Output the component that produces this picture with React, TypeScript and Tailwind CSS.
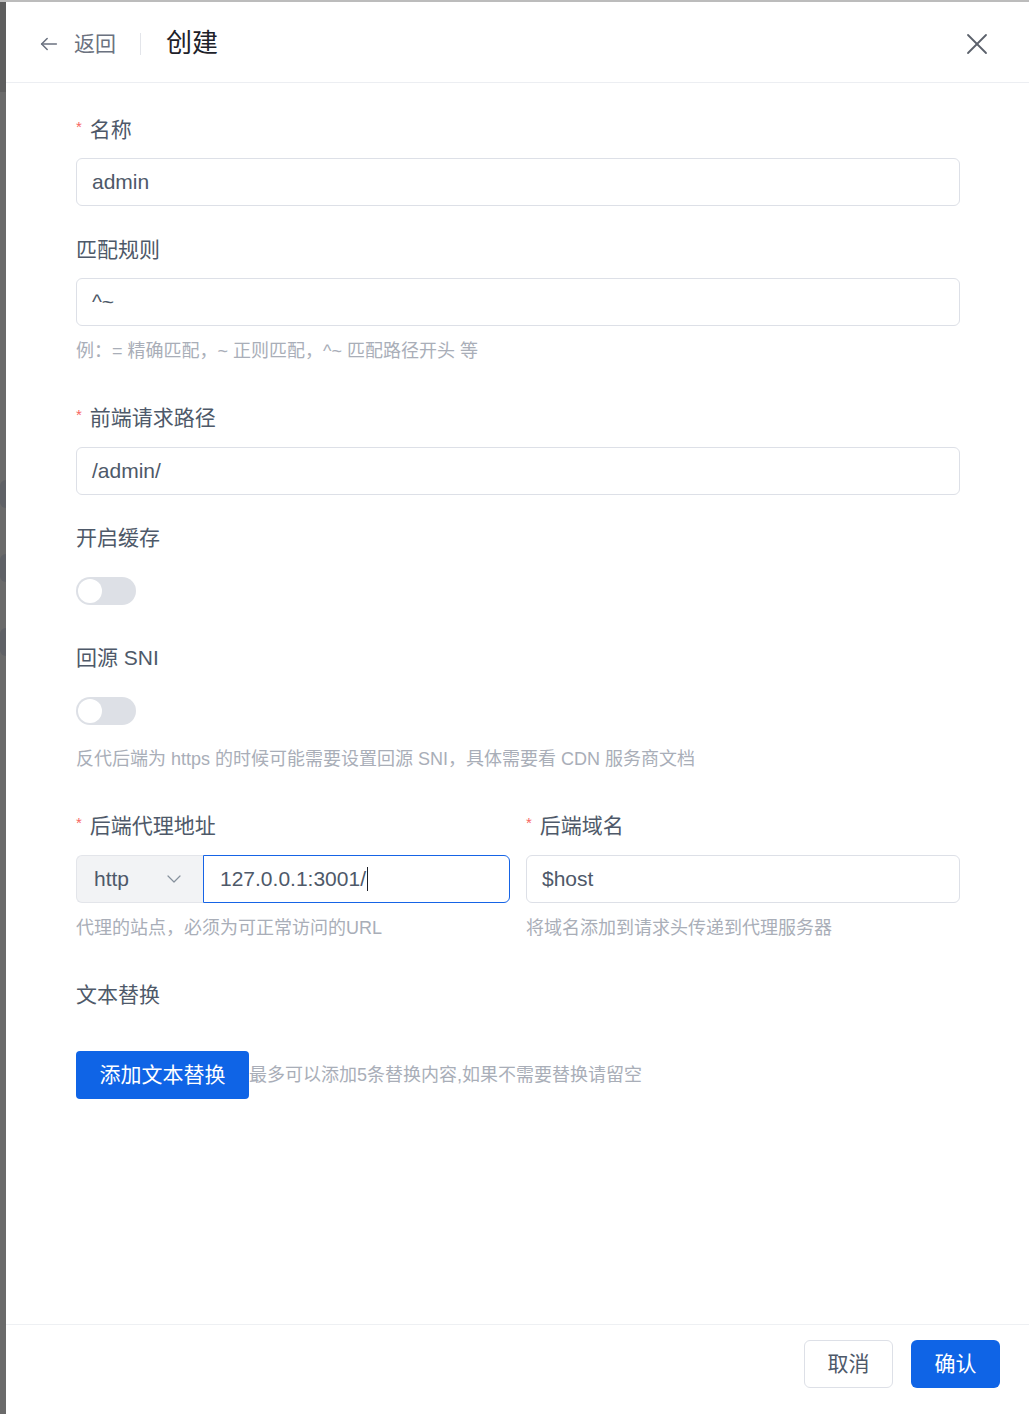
import React from "react";

const font = { fontFamily: '"Liberation Sans", "Noto Sans CJK SC", sans-serif' };

function Label({ text, required }: { text: string; required?: boolean }) {
  return (
    <div className="flex h-[32px] items-center text-[21px] text-[#4e5969]">
      {required && <span className="mr-[8px] text-[15px] leading-none text-[#f76560] -translate-y-[4px]">*</span>}
      <span>{text}</span>
    </div>
  );
}

function Input({ value, mt = "mt-[12px]" }: { value: string; mt?: string }) {
  return (
    <div className={`${mt} flex h-[48px] items-center rounded-[6px] border border-[#dde0e7] bg-white px-[15px] text-[21px] text-[#4e5969]`}>
      {value}
    </div>
  );
}

function Hint({ text, mt = "mt-[12px]" }: { text: string; mt?: string }) {
  return <div className={`${mt} h-[27px] text-[18px] leading-[27px] text-[#a9aeb8] whitespace-nowrap`}>{text}</div>;
}

function Switch() {
  return (
    <div className="mt-[13px] flex h-[48px] items-center">
      <div className="flex h-[28px] w-[60px] items-center rounded-full bg-[#dde0e6] px-[2px]">
        <div className="h-[24px] w-[24px] rounded-full bg-white" />
      </div>
    </div>
  );
}

export default function App() {
  return (
    <div className="flex h-[1414px] w-[1029px] flex-col overflow-hidden" style={font}>
      <div className="h-[2px] bg-[#bcbcbc]" />
      <div className="flex flex-1">
        <div className="flex w-[6px] flex-col bg-[#6a6a6a]">
          <div className="h-[90px] bg-[#5e5e5e]" />
          <div className="h-[388px]" />
          <div className="h-[28px] rounded-l-full bg-[#5f6166]" />
          <div className="h-[46px]" />
          <div className="h-[28px] rounded-l-full bg-[#5f6166]" />
          <div className="h-[46px]" />
          <div className="h-[28px] rounded-l-full bg-[#5f6166]" />
        </div>
        <div className="flex flex-1 flex-col bg-white">
          {/* header */}
          <div className="flex h-[81px] items-center border-b border-[#eceef2] pl-[32px] pr-[40px] pt-[3px]">
            <svg width="22" height="22" viewBox="0 0 24 24" fill="none" stroke="#6b7280" strokeWidth="1.7" strokeLinecap="round" strokeLinejoin="round">
              <path d="M20 12H4" />
              <path d="M10 6l-6 6 6 6" />
            </svg>
            <span className="ml-[14px] text-[21px] text-[#6b7280]">返回</span>
            <div className="ml-[24px] h-[22px] w-px bg-[#e3e5ea]" />
            <span className="ml-[25px] text-[26px] text-[#1d2129]">创建</span>
            <div className="flex-1" />
            <svg width="24" height="24" viewBox="0 0 24 24" fill="none" stroke="#5b616b" strokeWidth="1.8" strokeLinecap="round">
              <path d="M3 3l18 18" />
              <path d="M21 3L3 21" />
            </svg>
          </div>

          {/* body */}
          <div className="flex-1 pl-[70px] pr-[69px] pt-[31px]">
            <Label text="名称" required />
            <Input value="admin" />

            <div className="mt-[28px]" />
            <Label text="匹配规则" />
            <Input value="^~" />
            <Hint text="例：= 精确匹配，~ 正则匹配，^~ 匹配路径开头 等" />

            <div className="mt-[37px]" />
            <Label text="前端请求路径" required />
            <Input value="/admin/" mt="mt-[13px]" />

            <div className="mt-[27px]" />
            <Label text="开启缓存" />
            <Switch />

            <div className="mt-[27px]" />
            <Label text="回源 SNI" />
            <Switch />
            <Hint text="反代后端为 https 的时候可能需要设置回源 SNI，具体需要看 CDN 服务商文档" mt="mt-[11px]" />

            <div className="mt-[37px] grid grid-cols-2 gap-x-[16px]">
              <div>
                <Label text="后端代理地址" required />
                <div className="mt-[13px] flex h-[48px]">
                  <div className="flex w-[127px] items-center justify-between rounded-l-[6px] border border-r-0 border-[#e3e5ea] bg-[#f2f3f5] pl-[17px] pr-[20px] text-[21px] text-[#4e5969]">
                    <span>http</span>
                    <svg width="18" height="18" viewBox="0 0 18 18" fill="none" stroke="#86909c" strokeWidth="1.2" strokeLinecap="round" strokeLinejoin="round">
                      <path d="M3 6l6 6 6-6" />
                    </svg>
                  </div>
                  <div className="flex flex-1 items-center rounded-r-[6px] border border-[#1664e6] px-[16px] text-[21px] text-[#4e5969]">
                    <span>127.0.0.1:3001/</span>
                    <span className="ml-px h-[24px] w-px bg-[#1d2129]" />
                  </div>
                </div>
                <Hint text="代理的站点，必须为可正常访问的URL" />
              </div>
              <div>
                <Label text="后端域名" required />
                <Input value="$host" mt="mt-[13px]" />
                <Hint text="将域名添加到请求头传递到代理服务器" />
              </div>
            </div>

            <div className="mt-[37px]" />
            <Label text="文本替换" />
            <div className="mt-[40px] flex items-center">
              <div className="flex h-[48px] w-[173px] items-center justify-center rounded-[4px] bg-[#0f64e6] text-[21px] text-white">
                添加文本替换
              </div>
              <span className="text-[18px] text-[#a9aeb8]">最多可以添加5条替换内容,如果不需要替换请留空</span>
            </div>
          </div>

          {/* footer */}
          <div className="flex h-[90px] items-start justify-end gap-[18px] border-t border-[#eef0f3] pr-[29px] pt-[15px]">
            <div className="flex h-[48px] w-[89px] items-center justify-center rounded-[6px] border border-[#dde0e7] text-[21px] text-[#4e5969]">
              取消
            </div>
            <div className="flex h-[48px] w-[89px] items-center justify-center rounded-[6px] bg-[#0f64e6] text-[21px] text-white">
              确认
            </div>
          </div>
        </div>
      </div>
    </div>
  );
}
